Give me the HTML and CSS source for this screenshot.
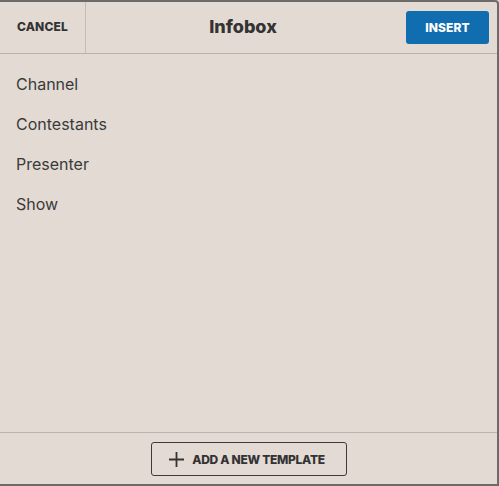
FILE: index.html
```html
<!DOCTYPE html>
<html>
<head>
<meta charset="utf-8">
<link rel="stylesheet" href="styles.css">
</head>
<body>
<div class="dialog">
  <header class="head">
    <button class="cancel">CANCEL</button>
    <div class="title">Infobox</div>
    <div class="actions"><button class="insert">INSERT</button></div>
  </header>
  <ul class="list">
    <li>Channel</li>
    <li>Contestants</li>
    <li>Presenter</li>
    <li>Show</li>
  </ul>
  <footer class="foot">
    <button class="add">
      <svg width="17" height="17" viewBox="0 0 17 17"><path d="M8.5 1v15M1 8.5h15" stroke="#333" stroke-width="1.8" fill="none"/></svg>
      <span>ADD A NEW TEMPLATE</span>
    </button>
  </footer>
</div>
</body>
</html>
```
FILE: styles.css
```css
* { box-sizing: border-box; }
html, body { margin: 0; padding: 0; }
body { font-family: Inter, "Liberation Sans", sans-serif; background: #e3dad4; }
.dialog {
  width: 499px; height: 486px;
  background: #e3dad4;
  border-top: 2px solid #6d6a67;
  border-right: 2px solid #6d6a67;
  border-bottom: 2px solid #6d6a67;
  border-top-right-radius: 4px;
  display: flex; flex-direction: column;
}
.head {
  height: 52px; flex: none;
  display: flex; align-items: center;
  border-bottom: 1px solid #bcb2ac;
}
button { font-family: inherit; cursor: pointer; }
.cancel {
  width: 86px; height: 51px;
  background: none; border: none;
  border-right: 1px solid #c4bbb5;
  font-size: 12px; font-weight: 800; color: #333;
  letter-spacing: 0.2px; padding: 0 0 3px 0;
}
.title {
  flex: 1; text-align: center;
  font-size: 18px; font-weight: 800; color: #333;
  padding-right: 6px; padding-bottom: 2px;
}
.actions { padding-right: 8px; }
.insert {
  width: 83px; height: 33px;
  background: #0f6db0; color: #fff;
  border: none; border-radius: 3px;
  font-size: 12px; font-weight: 800; letter-spacing: 0.1px;
  margin-bottom: 1px; padding-bottom: 1px;
}
.list {
  list-style: none; margin: 0; padding: 9px 0 0 16px;
  flex: 1;
}
.list li {
  height: 40px; line-height: 42px;
  font-size: 16px; color: #3a3a3a;
}
.foot {
  flex: none; height: 52px;
  border-top: 1px solid #bcb2ac;
  display: flex; justify-content: center; align-items: flex-start;
  padding-top: 9px;
}
.add {
  width: 196px; height: 34px;
  background: none;
  border: 1px solid #3a3a3a; border-radius: 3px;
  display: flex; align-items: center; justify-content: center; gap: 7px;
  font-size: 12px; font-weight: 800; color: #333;
  letter-spacing: -0.3px;
  padding: 0 4px 0 0;
}
.add svg { display: block; }
```
